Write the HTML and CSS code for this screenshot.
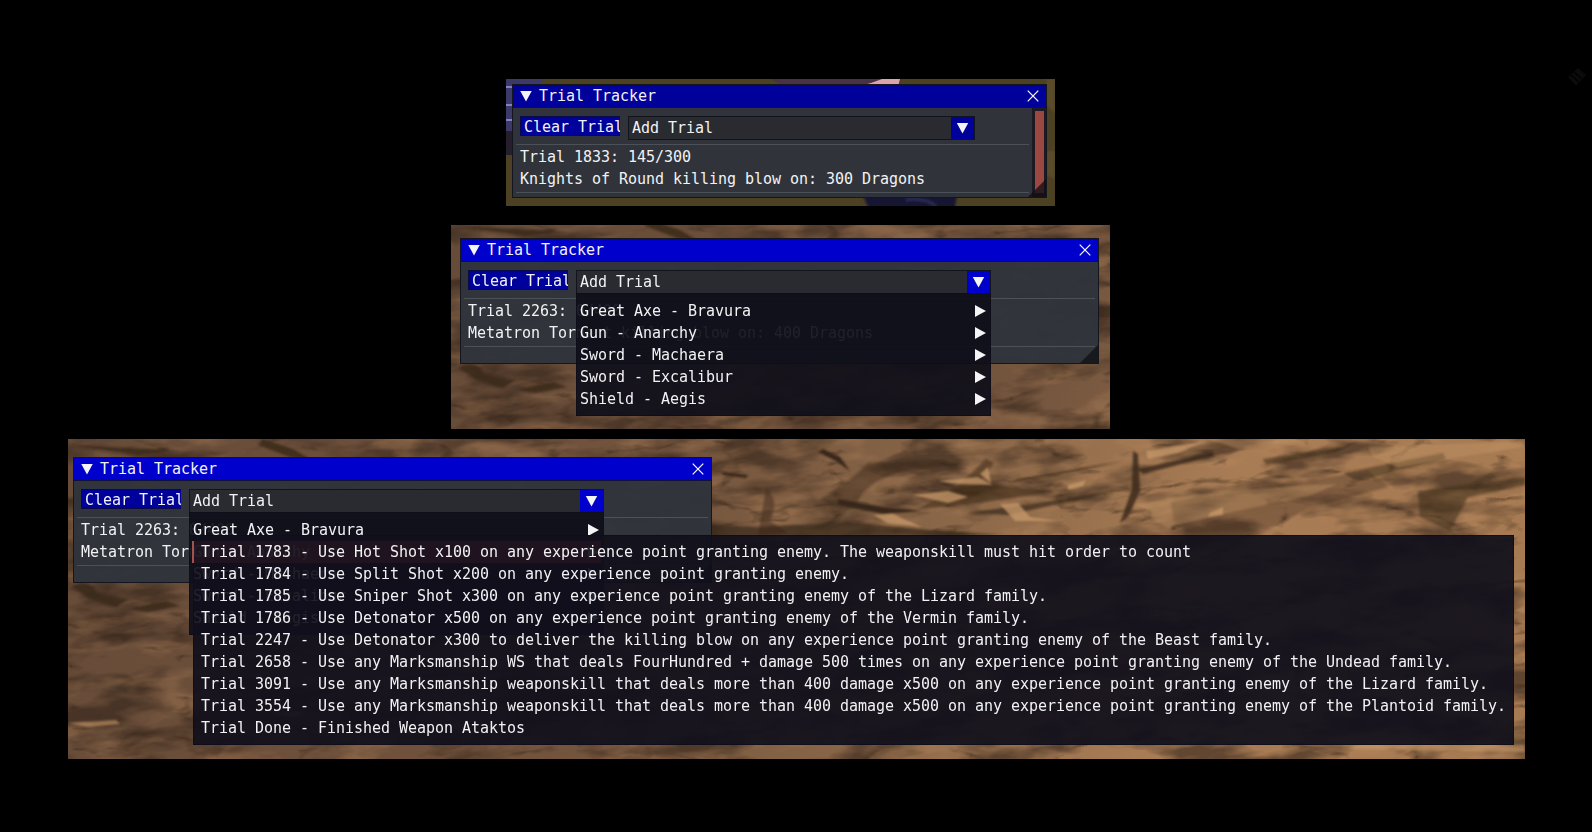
FILE: index.html
```html
<!DOCTYPE html>
<html lang="en">
<head>
<meta charset="utf-8">
<title>Trial Tracker</title>
<link rel="stylesheet" href="styles.css">
</head>
<body>
<svg class="defs" width="0" height="0" aria-hidden="true">
  <defs>
    <linearGradient id="rockBase" x1="0" x2="1" y1="0" y2="0.08">
      <stop offset="0" stop-color="#664b38"/>
      <stop offset="0.42" stop-color="#73543d"/>
      <stop offset="0.6" stop-color="#886547"/>
      <stop offset="0.8" stop-color="#a87c55"/>
      <stop offset="1" stop-color="#a67a52"/>
    </linearGradient>
    <filter id="cracks" x="0" y="0" width="100%" height="100%" color-interpolation-filters="sRGB">
      <feTurbulence type="turbulence" baseFrequency="0.009 0.024" numOctaves="4" seed="23"/>
      <feColorMatrix values="0 0 0 0 0.20  0 0 0 0 0.14  0 0 0 0 0.09  -5 0 0 0 0.85"/>
    </filter>
    <filter id="shade" x="0" y="0" width="100%" height="100%" color-interpolation-filters="sRGB">
      <feTurbulence type="fractalNoise" baseFrequency="0.012 0.034" numOctaves="4" seed="7"/>
      <feColorMatrix values="0 0 0 0 0.20  0 0 0 0 0.14  0 0 0 0 0.10  4 0 0 0 -1.75"/>
    </filter>
    <filter id="lights" x="0" y="0" width="100%" height="100%" color-interpolation-filters="sRGB">
      <feTurbulence type="fractalNoise" baseFrequency="0.016 0.045" numOctaves="4" seed="5"/>
      <feColorMatrix values="0 0 0 0 0.74  0 0 0 0 0.55  0 0 0 0 0.38  0 4 0 0 -2"/>
    </filter>
    <filter id="soft"><feGaussianBlur stdDeviation="0.9"/></filter>
    <g id="rock">
      <rect x="-10" width="1480" height="330" fill="url(#rockBase)"/>
      <g transform="rotate(-5 700 160)">
        <rect x="-40" y="-80" width="1560" height="490" filter="url(#shade)" opacity="0.6"/>
        <rect x="-40" y="-80" width="1560" height="490" filter="url(#lights)" opacity="0.3"/>
        <rect x="-40" y="-80" width="1560" height="490" filter="url(#cracks)" opacity="0.6"/>
      </g>
      <g filter="url(#soft)" fill="#38281a">
        <path d="M195 0 L225 10 L245 22 L222 18 L190 6Z M0 6 L70 16 L110 12 L60 9Z M4 148 Q20 138 30 155 L60 160 L48 168 L22 160Z M62 170 L98 162 L112 167 L80 173Z" opacity=".85"/>
        <path d="M755 10 L772 18 L782 32 L768 22 L750 13Z M654 33 L680 36 L678 39 L655 36Z M770 60 L815 68 L855 72 L815 75 L770 66Z" />
        <path d="M752 60 Q774 50 800 24 L855 21 L900 26 L842 30 Q800 40 790 62 L764 68Z M698 50 Q712 60 702 82 L720 94 L690 96Z" opacity=".45"/>
        <path d="M850 70 L890 48 L918 20 L926 24 L912 42 L940 48 L990 52 L895 66Z" opacity=".55"/>
        <path d="M1065 12 L1070 15 L1072 52 L1060 78 L1052 84 L1064 50Z M1070 30 L1145 13 L1145 17 L1075 35Z" opacity=".8"/>
        <path d="M1103 63 L1300 32 L1320 48 L1240 70 L1200 90 L1121 94 L1106 82Z" opacity=".35"/>
        <path d="M640 86 L690 88 L780 83 L850 90 L935 96 L640 98Z M950 40 L1055 22 L1010 32 L940 44Z M900 74 L1050 52 L940 76Z" opacity=".7"/>
        <path d="M1195 20 L1275 8 L1268 13 L1198 26Z M1275 34 L1375 14 L1378 20 L1290 42Z M1350 52 L1457 38 V46 L1400 58 L1382 92 L1352 78Z" opacity=".5"/>
      </g>
      <g filter="url(#soft)" fill="#c99b6b">
        <path d="M845 56 L880 52 L900 58 L880 64 L862 60Z M932 65 L950 64 L962 78 L990 82 L947 82Z M870 42 L910 38 L925 46 L890 45Z M912 35 L920 28 L923 44Z" opacity=".75"/>
        <path d="M805 76 L825 75 L854 88 L820 84Z M1000 46 L1018 41 L1015 47 L1000 51Z M1078 12 L1140 2 L1110 14 L1080 20Z M1142 74 L1155 68 L1155 76 L1140 78Z" opacity=".75"/>
        <path d="M1065 66 Q1140 50 1270 45 L1240 57 L1150 76 L1100 88 Q1080 82 1084 72Z M1300 8 L1456 2 V8 L1330 28 L1305 18Z M1140 0 L1240 1 L1170 10Z" opacity=".35"/>
        <path d="M200 274 L240 272 L226 278Z M0 284 L48 281 L52 285 L20 288Z M1300 302 L1457 306 V313 L1280 310Z M1445 172 L1457 166 V174Z" opacity=".6"/>
      </g>
    </g>
    <symbol id="close" viewBox="0 0 12 12"><path d="M.7 .7 L11.3 11.3 M11.3 .7 L.7 11.3" stroke="#fff" stroke-width="1.2" fill="none"/></symbol>
  </defs>
</svg>

<main class="desktop">
  <svg class="mark" viewBox="0 0 18 18"><path d="M0 9 L10 0 L18 7 L8 18Z" fill="#0b0b0b"/><path d="M3 7 L11 14 M6 4 L14 11" stroke="#020202" stroke-width="1.5"/></svg>

  <section class="shot shot-one">
    <svg class="scene" viewBox="0 0 549 127">
      <rect width="549" height="127" fill="#4c4122"/>
      <path d="M0 0 H38 L24 14 L18 80 L0 75Z" fill="#3c3868"/>
      <path d="M0 8 H8 M0 26 H8 M0 41 H8" stroke="#8080c8" stroke-width="2"/>
      <path d="M0 52 H8 V76 H0Z" fill="#251f2c"/>
      <path d="M265 0 H395 L391 14 H290Z" fill="#4a3146"/>
      <path d="M365 4 L376 0 H394 L392 8 H350Z" fill="#dba5ad"/>
      <g filter="url(#soft)">
        <path d="M355 112 H452 L448 132 H364Z" fill="#171433"/>
        <path d="M400 121 Q418 118 430 127" stroke="#2c2c55" stroke-width="3" fill="none"/>
        <path d="M540 0 H549 V35 L540 25Z M540 72 H549 V100 L540 96Z" fill="#5a4b29"/>
      </g>
    </svg>
    <div class="window dim">
      <header class="title"><i class="tri down"></i><span>Trial Tracker</span><svg class="close"><use href="#close"/></svg></header>
      <div class="content">
        <div class="tools"><button class="clear">Clear Trial</button><div class="combo"><span>Add Trial</span><b class="drop"><i class="tri down"></i></b></div></div>
        <hr>
        <p>Trial 1833: 145/300</p>
        <p>Knights of Round killing blow on: 300 Dragons</p>
        <hr class="end">
      </div>
      <div class="scroll"><div class="thumb"></div></div>
      <i class="grip"></i>
    </div>
  </section>

  <section class="shot shot-two">
    <svg class="scene" viewBox="-4 5 659 204"><use href="#rock"/></svg>
    <div class="window">
      <header class="title"><i class="tri down"></i><span>Trial Tracker</span><svg class="close"><use href="#close"/></svg></header>
      <div class="content">
        <div class="tools"><button class="clear">Clear Trial</button><div class="combo"><span>Add Trial</span><b class="drop"><i class="tri down"></i></b></div></div>
        <hr>
        <p>Trial 2263: 0/400</p>
        <p>Metatron Torment killing blow on: 400 Dragons</p>
        <hr class="end">
      </div>
      <i class="grip"></i>
      <ul class="popup">
        <li>Great Axe - Bravura<i class="tri right"></i></li>
        <li>Gun - Anarchy<i class="tri right"></i></li>
        <li>Sword - Machaera<i class="tri right"></i></li>
        <li>Sword - Excalibur<i class="tri right"></i></li>
        <li>Shield - Aegis<i class="tri right"></i></li>
      </ul>
    </div>
  </section>

  <section class="shot shot-three">
    <svg class="scene" viewBox="0 0 1457 320"><use href="#rock"/></svg>
    <div class="window">
      <header class="title"><i class="tri down"></i><span>Trial Tracker</span><svg class="close"><use href="#close"/></svg></header>
      <div class="content">
        <div class="tools"><button class="clear">Clear Trial</button><div class="combo"><span>Add Trial</span><b class="drop"><i class="tri down"></i></b></div></div>
        <hr>
        <p>Trial 2263: 0/400</p>
        <p>Metatron Torment killing blow on: 400 Dragons</p>
        <hr class="end">
      </div>
      <i class="grip"></i>
      <ul class="popup">
        <li>Great Axe - Bravura<i class="tri right"></i></li>
        <li class="active">Gun - Anarchy<i class="tri right"></i></li>
        <li>Sword - Machaera<i class="tri right"></i></li>
        <li>Sword - Excalibur<i class="tri right"></i></li>
        <li>Shield - Aegis<i class="tri right"></i></li>
      </ul>
      <ul class="submenu">
        <li>Trial 1783 - Use Hot Shot x100 on any experience point granting enemy. The weaponskill must hit order to count</li>
        <li>Trial 1784 - Use Split Shot x200 on any experience point granting enemy.</li>
        <li>Trial 1785 - Use Sniper Shot x300 on any experience point granting enemy of the Lizard family.</li>
        <li>Trial 1786 - Use Detonator x500 on any experience point granting enemy of the Vermin family.</li>
        <li>Trial 2247 - Use Detonator x300 to deliver the killing blow on any experience point granting enemy of the Beast family.</li>
        <li>Trial 2658 - Use any Marksmanship WS that deals FourHundred + damage 500 times on any experience point granting enemy of the Undead family.</li>
        <li>Trial 3091 - Use any Marksmanship weaponskill that deals more than 400 damage x500 on any experience point granting enemy of the Lizard family.</li>
        <li>Trial 3554 - Use any Marksmanship weaponskill that deals more than 400 damage x500 on any experience point granting enemy of the Plantoid family.</li>
        <li>Trial Done - Finished Weapon Ataktos</li>
      </ul>
    </div>
  </section>
</main>
</body>
</html>
```
FILE: styles.css
```css
* { box-sizing: border-box; }
body {
  margin: 0;
  background: #000;
  color: #f2f2f4;
  font: 15px/22px "DejaVu Sans Mono", monospace;
  letter-spacing: -0.031px;
  overflow: hidden;
}
p, ul { margin: 0; padding: 0; list-style: none; }
p, li, span { white-space: pre; }
.defs { position: absolute; }
.desktop { position: relative; width: 1592px; height: 832px; overflow: hidden; }
.mark { position: absolute; left: 1568px; top: 68px; width: 18px; height: 18px; }

/* captured game regions */
.shot { position: absolute; }
.scene { position: absolute; inset: 0; width: 100%; height: 100%; }
.shot-one { left: 506px; top: 79px; width: 549px; height: 127px; }
.shot-two { left: 451px; top: 225px; width: 659px; height: 204px; }
.shot-three { left: 68px; top: 439px; width: 1457px; height: 320px; }

/* windows */
.window {
  --accent: #0000cd;
  position: absolute;
  width: 639px;
  height: 126px;
  border: 1px solid #14161f;
  background: rgba(47, 52, 59, 0.97);
}
.shot-one .window { left: 6px; top: 5px; width: 535px; height: 114px; }
.shot-two .window { left: 9px; top: 13px; }
.shot-three .window { left: 5px; top: 18px; }
.window.dim { --accent: #00009b; }

.title {
  display: flex;
  align-items: center;
  height: 23px;
  padding: 0 7px;
  background: var(--accent);
  border-bottom: 1px solid #10103a;
}
.title span { margin-left: 7px; flex: 1; }
.close { width: 12px; height: 12px; }

.tri { display: block; flex: none; background: #f4f4f6; }
.tri.down { width: 12px; height: 11px; clip-path: polygon(0 0, 100% 0, 50% 100%); }
.tri.right { width: 11px; height: 12px; clip-path: polygon(0 0, 100% 50%, 0 100%); }

.content { padding: 8px 3px 0; }
.dim .content { width: 519px; }
.tools { display: flex; align-items: flex-start; gap: 8px; padding-left: 4px; }
.clear {
  width: 100px;
  height: 20px;
  padding: 1px 0 0 3px;
  border: 1px solid #0a0a48;
  border-right: 0;
  background: #00009b;
  color: inherit;
  font: inherit;
  line-height: 19px;
  letter-spacing: inherit;
  text-align: left;
  white-space: pre;
  overflow: hidden;
}
.combo {
  display: flex;
  justify-content: space-between;
  width: 415px;
  height: 24px;
  padding-left: 3px;
  border: 1px solid #12141d;
  background: #292b31;
}
.dim .combo { width: 347px; }
.drop { display: grid; place-items: center; width: 23px; height: 22px; background: var(--accent); }
hr { height: 1px; margin: 4px 0 1px; border: 0; background: #4c5057; }
.content p { padding-left: 4px; }
hr.end { margin: 2px 0 0; }

.grip {
  position: absolute;
  right: 0;
  bottom: 0;
  width: 18px;
  height: 18px;
  background: #17191d;
  clip-path: polygon(100% 0, 100% 100%, 0 100%);
}
.dim .grip { background: rgba(18, 14, 20, 0.78); }
.scroll { position: absolute; right: 0; top: 23px; bottom: 0; width: 14px; padding: 3px 2px 4px 3px; background: #1d1a24; }
.thumb { height: 100%; background: #9b4843; }

/* menus */
.popup, .submenu { position: absolute; border: 1px solid rgba(14, 13, 26, 0.9); background: rgba(14, 14, 25, 0.92); }
.popup { left: 115px; top: 54px; width: 415px; height: 123px; padding: 7px 3px 5px; border-top: 0; }
.popup li { display: flex; align-items: center; justify-content: space-between; height: 22px; padding-right: 1px; }
.popup .active {
  margin-right: -1px;
  padding-right: 2px;
  background: #b84646;
}
.submenu { left: 119px; top: 77px; width: 1321px; height: 210px; padding: 5px 7px; background: rgba(16, 15, 27, 0.92); }
.submenu li { height: 22px; }
.submenu::before { content: ""; position: absolute; left: -2px; top: 5px; width: 2px; height: 22px; background: #a5524d; }
```
